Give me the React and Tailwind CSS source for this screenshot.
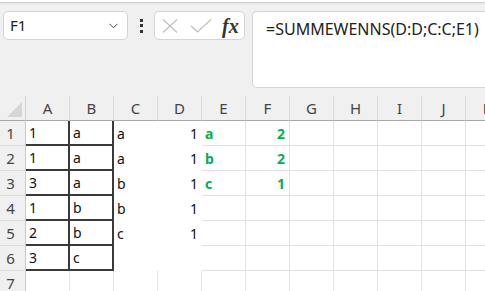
import React from "react";

const ui = { fontFamily: '"Segoe UI", "Noto Sans", "Open Sans", sans-serif' };
const cellFont = { fontFamily: '"Noto Sans", "Open Sans", sans-serif' };

const data = [
  ["1", "a", "a", "1", "a", "2"],
  ["1", "a", "a", "1", "b", "2"],
  ["3", "a", "b", "1", "c", "1"],
  ["1", "b", "b", "1", "", ""],
  ["2", "b", "c", "1", "", ""],
  ["3", "c", "", "", "", ""],
  ["", "", "", "", "", ""],
];

const cols = ["A", "B", "C", "D", "E", "F", "G", "H", "I", "J", "K"];

function Cell({ r, c, v }) {
  const inBlock = r < 6;
  let cls = "h-[25px] bg-white flex items-center text-[14px] overflow-hidden whitespace-nowrap ";
  if (inBlock && (c === 0 || c === 1)) {
    cls += "text-[#111] border-r-2 border-b-2 border-[#3a3a3a] pl-[3px]";
  } else if (inBlock && (c === 2 || c === 3)) {
    cls += c === 3 ? "text-[#111] justify-end pr-[4px]" : "text-[#111] pl-[3px]";
  } else {
    cls += "border-r border-b border-[#e1e1e1] ";
    if (c === 4) cls += "pl-[3px] font-bold text-[#00b050]";
    else if (c === 5) cls += "justify-end pr-[4px] font-bold text-[#00b050]";
    else cls += "text-[#111]";
  }
  return (
    <div className={cls} style={cellFont}>
      {v}
    </div>
  );
}

export default function App() {
  return (
    <div className="w-[485px] h-[291px] overflow-hidden bg-[#f0f0f0] flex flex-col" style={ui}>
      <div className="h-[2px] bg-white shadow-[0_1px_2px_rgba(0,0,0,0.18)] shrink-0" />
      {/* toolbar */}
      <div className="h-[94px] shrink-0 flex items-start pl-[3px] pt-[9px]">
        <div className="w-[125px] h-[29px] rounded-[5px] border border-[#d4d4d4] bg-white flex items-center justify-between pl-[6px] pr-[9px] text-[15px] text-[#222]">
          <span>F1</span>
          <svg width="9" height="6" viewBox="0 0 9 6" fill="none">
            <path d="M0.5 0.8 L4.5 4.8 L8.5 0.8" stroke="#444" strokeWidth="1" />
          </svg>
        </div>
        <div className="w-[26px] h-[29px] flex flex-col items-center justify-center gap-[2.5px]">
          <div className="w-[3px] h-[3px] bg-[#333]" />
          <div className="w-[3px] h-[3px] bg-[#333]" />
          <div className="w-[3px] h-[3px] bg-[#333]" />
        </div>
        <div className="w-[91px] h-[29px] rounded-[5px] border border-[#d4d4d4] bg-white flex items-center pl-[7px]">
          <svg width="16" height="14" viewBox="0 0 16 14" fill="none">
            <path d="M1 0.5 L15 13.5 M15 0.5 L1 13.5" stroke="#bcbcbc" strokeWidth="1.1" />
          </svg>
          <svg width="22" height="14" viewBox="0 0 22 14" fill="none" className="ml-[12px]">
            <path d="M1 7 L7.5 13 L21 0.5" stroke="#bcbcbc" strokeWidth="1.1" />
          </svg>
          <span
            className="ml-[10px] text-[20px] italic font-bold text-[#333] leading-none"
            style={{ fontFamily: '"Liberation Serif", "DejaVu Serif", serif' }}
          >
            fx
          </span>
        </div>
        <div className="ml-[7px] flex-1 h-[77px] rounded-l-[5px] border border-r-0 border-[#d4d4d4] bg-white pl-[13px] pt-[5px] text-[16px] text-[#222] whitespace-nowrap">
          =SUMMEWENNS(D:D;C:C;E1)
        </div>
      </div>
      {/* sheet */}
      <div className="grid grid-cols-[26px_repeat(11,44px)] w-[510px]">
        {/* corner */}
        <div className="h-[25px] bg-[#f0f0f0] border-r border-b border-[#a8a8a8] border-r-[#d4d4d4] relative">
          <div className="absolute right-[3px] bottom-[3px] w-0 h-0 border-l-[15px] border-l-transparent border-b-[15px] border-b-[#d6d6d6]" />
        </div>
        {cols.map((c) => (
          <div
            key={c}
            className="h-[25px] bg-[#f0f0f0] border-r border-r-[#dadada] border-b border-b-[#a8a8a8] flex items-center justify-center text-[15px] text-[#444]"
          >
            {c}
          </div>
        ))}
        {data.map((row, r) => (
          <React.Fragment key={r}>
            <div className="h-[25px] bg-[#f0f0f0] border-r border-r-[#c8c8c8] border-b border-b-[#dadada] flex items-center justify-center text-[15px] text-[#444] pr-[4px]">
              {r + 1}
            </div>
            {cols.map((_, c) => (
              <Cell key={c} r={r} c={c} v={c < 6 ? row[c] : ""} />
            ))}
          </React.Fragment>
        ))}
      </div>
    </div>
  );
}
